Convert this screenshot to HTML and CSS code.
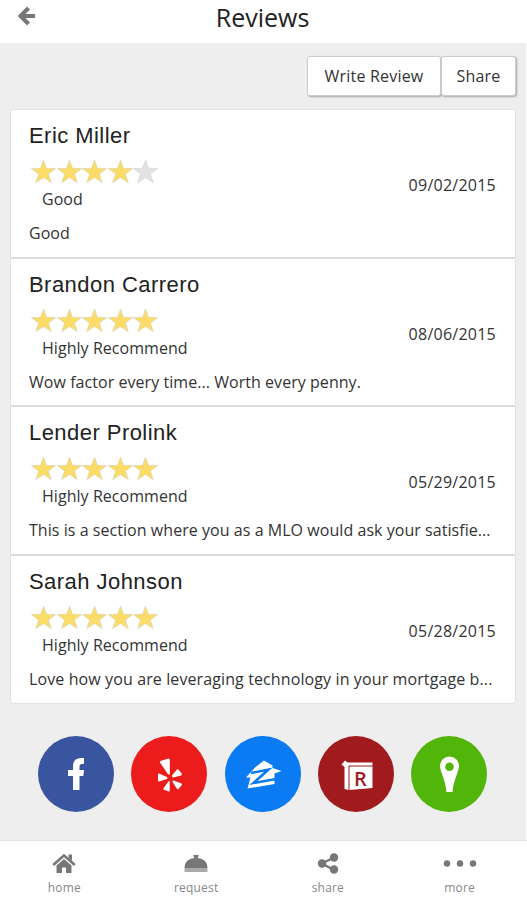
FILE: index.html
```
<!DOCTYPE html>
<html lang="en">

<head>
    <meta charset="UTF-8">
    <meta name="viewport" content="width=device-width, initial-scale=1.0">
    <title>Reviews</title>
    <link rel="stylesheet" href="styles.css">
</head>

<body>
    <svg class="defs">
        <symbol id="star" viewBox="0 0 26 25">
            <path d="M13 1L16 9.2L25.3 9.5L18 15L20.8 23.8L13 18.6L5.2 23.8L8 15L0.7 9.5L10 9.2Z" />
        </symbol>
    </svg>

    <header>
        <a class="back" href="#">
            <svg width="18" height="20" viewBox="0 0 18 20">
                <path d="M10.500 2L2.500 10L10.500 18M3 10H17" fill="none" stroke="#777" stroke-width="4" />
            </svg>
        </a>
        <h1>Reviews</h1>
    </header>

    <main>
        <div class="actions">
            <button class="write">Write Review</button>
            <button class="share">Share</button>
        </div>

        <div class="reviews">
            <div class="review">
                <h2>Eric Miller</h2>
                <div class="stars">
                    <svg><use href="#star" /></svg><svg><use href="#star" /></svg><svg><use href="#star" /></svg><svg><use href="#star" /></svg><svg class="off"><use href="#star" /></svg>
                </div>
                <div class="rating">Good</div>
                <div class="date">09/02/2015</div>
                <p>Good</p>
            </div>
            <div class="review">
                <h2>Brandon Carrero</h2>
                <div class="stars">
                    <svg><use href="#star" /></svg><svg><use href="#star" /></svg><svg><use href="#star" /></svg><svg><use href="#star" /></svg><svg><use href="#star" /></svg>
                </div>
                <div class="rating">Highly Recommend</div>
                <div class="date">08/06/2015</div>
                <p>Wow factor every time... Worth every penny.</p>
            </div>
            <div class="review">
                <h2>Lender Prolink</h2>
                <div class="stars">
                    <svg><use href="#star" /></svg><svg><use href="#star" /></svg><svg><use href="#star" /></svg><svg><use href="#star" /></svg><svg><use href="#star" /></svg>
                </div>
                <div class="rating">Highly Recommend</div>
                <div class="date">05/29/2015</div>
                <p>This is a section where you as a MLO would ask your satisfie...</p>
            </div>
            <div class="review">
                <h2>Sarah Johnson</h2>
                <div class="stars">
                    <svg><use href="#star" /></svg><svg><use href="#star" /></svg><svg><use href="#star" /></svg><svg><use href="#star" /></svg><svg><use href="#star" /></svg>
                </div>
                <div class="rating">Highly Recommend</div>
                <div class="date">05/28/2015</div>
                <p class="long">Love how you are leveraging technology in your mortgage b...</p>
            </div>
        </div>

        <div class="social">
            <a class="facebook" href="#">
                <svg viewBox="0 0 76 76">
                    <path d="M35 54V40H30V34H35V30.500Q35 22 43 22H46V28H43.500Q41.500 28 41.500 30.500V34H46L45.300 40H41.500V54Z" />
                </svg>
            </a>
            <a class="yelp" href="#">
                <svg viewBox="0 0 76 76">
                    <path d="M29.500 25L37.500 22.500Q38.800 22.300 38.800 24V38Q38 39.500 36.800 38L29 26.500Q28.600 25.500 29.500 25Z" />
                    <path d="M28 37.500L36 41Q37 42 36 43L28 45.500Q27 45.500 27 44V38.500Q27.200 37.300 28 37.500Z" />
                    <path d="M38.700 46V54.500Q38.500 56 37 55.300L32.500 53.500Q32 52.800 32.700 52L37.300 45.500Q38.500 44.500 38.700 46Z" />
                    <path d="M42.500 44.500L50.500 47.500Q51.500 48 50.800 49L47.500 53Q46.500 53.500 45.800 52.500L41.500 45.700Q41.300 44.500 42.500 44.500Z" />
                    <path d="M41 39.500L46 33.500Q47 32.700 47.700 33.700L51 38Q51 39.200 50 39.500L42.200 41.500Q40.700 41 41 39.500Z" />
                </svg>
            </a>
            <a class="zillow" href="#">
                <svg viewBox="0 0 76 76">
                    <path d="M39 24.500L47.500 29.500V32L56.500 35L49.500 37.500V48L22.500 52.500L25.500 41.500H21L30 31.500Z" />
                    <path class="z" d="M26 37L43.500 33.500L28.500 47L51 43" />
                </svg>
            </a>
            <a class="realtor" href="#">
                <svg viewBox="0 0 76 76">
                    <path d="M23.500 28.500L27 24.500L29.500 26.500H54.500V29.500H30.500V54L26.500 53V31Z" />
                    <path d="M31.500 30.500H54.500V52L31.500 54Z" />
                    <text x="36" y="49.500">R</text>
                </svg>
            </a>
            <a class="pin" href="#">
                <svg viewBox="0 0 76 76">
                    <path fill-rule="evenodd" d="M38.500 20.500A9.500 9.500 0 0 1 48 30C48 35 42.500 44 41.500 56H35.500C34.500 44 29 35 29 30A9.500 9.500 0 0 1 38.500 20.500ZM38.500 26.500A4.300 4.300 0 1 0 38.500 35.100A4.300 4.300 0 1 0 38.500 26.500Z" />
                </svg>
            </a>
        </div>
    </main>

    <nav>
        <a href="#">
            <svg width="36" height="24" viewBox="0 0 36 24">
                <path d="M18 7L25.500 13.500V21H20V15.500H16V21H10.500V13.500Z" />
                <path d="M7.200 13L18 3.500L28.800 13" fill="none" stroke="#777" stroke-width="2.500" />
                <path d="M22.500 2.500H26V9L22.500 6Z" />
            </svg>
            <span>home</span>
        </a>
        <a href="#">
            <svg width="36" height="24" viewBox="0 0 36 24">
                <path d="M15 3.500Q18 2 21 3.500L19.500 6Q29.500 7 29.500 16H6.500Q6.500 7 16.500 6Z" />
                <path class="light" d="M6.500 16H29.500V20H6.500Z" />
            </svg>
            <span>request</span>
        </a>
        <a href="#">
            <svg width="36" height="24" viewBox="0 0 36 24">
                <path d="M24 5.500L12 11.500L24 18" fill="none" stroke="#777" stroke-width="2.500" />
                <circle cx="24" cy="5.500" r="4.200" />
                <circle cx="12" cy="11.500" r="4.200" />
                <circle cx="24" cy="17.500" r="4.200" />
            </svg>
            <span>share</span>
        </a>
        <a href="#">
            <svg width="36" height="24" viewBox="0 0 36 24">
                <circle cx="5" cy="11.500" r="3.200" />
                <circle cx="18" cy="11.500" r="3.200" />
                <circle cx="31" cy="11.500" r="3.200" />
            </svg>
            <span>more</span>
        </a>
    </nav>
</body>

</html>
```
FILE: styles.css
```
* {
    box-sizing: border-box;
}

body {
    margin: 0;
    height: 900px;
    display: flex;
    flex-direction: column;
    font-family: "Open Sans", "Noto Sans", sans-serif;
    font-size: 16px;
    color: #333;
    background-color: #fff;
    overflow: hidden;
}

.defs {
    display: none;
}

header {
    display: flex;
    height: 43px;
    padding-left: 18px;
}

.back {
    width: 18px;
    margin-top: 6px;
}

.back svg {
    display: block;
}

h1 {
    flex: 1;
    margin: 0 38px 0 0;
    font-size: 25px;
    font-weight: normal;
    line-height: 35px;
    text-align: center;
    color: #222;
}

main {
    height: 797px;
    margin-right: 1px;
    padding: 13px 10px 0;
    background-color: #eee;
}

.actions {
    display: flex;
    justify-content: flex-end;
    height: 40px;
}

button {
    padding: 0;
    font-family: inherit;
    font-size: 16px;
    letter-spacing: 0.200px;
    color: #333;
    background-color: #fff;
    border: 1px solid #ccc;
    border-radius: 3px;
    box-shadow: 1px 1px 2px rgba(0, 0, 0, 0.3);
}

.write {
    width: 134px;
}

.share {
    width: 75px;
}

.reviews {
    margin-top: 13px;
    height: 595px;
    background-color: #fff;
    border: 1px solid #e2e2e2;
    border-radius: 3px;
}

.review {
    display: grid;
    grid-template-columns: 1fr 90px;
    grid-template-rows: 36px 24px 30px 1fr;
    height: 148.600px;
    padding: 7px 19px 0 18px;
    border-bottom: 2px solid #ddd;
}

.review:last-child {
    border-bottom: none;
}

h2 {
    grid-column: 1 / 3;
    margin: 0;
    font-family: "Liberation Sans", Arial, sans-serif;
    font-size: 22px;
    font-weight: normal;
    letter-spacing: 0.450px;
    line-height: 37px;
    color: #222;
}

.stars {
    display: flex;
    margin: 6px 0 0 1px;
}

.stars svg {
    width: 27px;
    height: 25px;
    margin-right: -1.400px;
    fill: #fbdc66;
    stroke: #ccc;
    stroke-width: 0.500;
}

.stars .off {
    fill: #e2e2e2;
}

.rating {
    grid-row: 3;
    padding-left: 13px;
    line-height: 44px;
    letter-spacing: 0.050px;
}

.date {
    grid-column: 2;
    grid-row: 2 / 4;
    line-height: 64px;
    letter-spacing: 0.250px;
    white-space: nowrap;
    text-align: right;
}

.review p {
    grid-column: 1 / 3;
    margin: 0;
    line-height: 53px;
    letter-spacing: 0.050px;
    white-space: nowrap;
}

.review .long {
    letter-spacing: 0.110px;
}

.social {
    display: flex;
    justify-content: space-between;
    margin: 32px 29px 0 28px;
}

.social a {
    width: 76px;
    height: 76px;
    border-radius: 50%;
}

.social svg {
    display: block;
    fill: #fff;
}

.facebook {
    background-color: #3a559f;
}

.yelp {
    background-color: #ec1c1c;
}

.zillow {
    background-color: #0a7bf2;
}

.zillow .z {
    fill: none;
    stroke: #0a7bf2;
    stroke-width: 2.500;
}

.realtor {
    background-color: #a01a1e;
}

.realtor text {
    font-size: 20px;
    font-weight: 600;
    fill: #a01a1e;
}

.pin {
    background-color: #52b60a;
}

nav {
    display: flex;
    height: 60px;
    border-top: 1px solid #e2e2e2;
}

nav a {
    width: 25%;
    padding: 11px 3px 0 0;
    text-align: center;
    font-size: 12px;
    line-height: 24px;
    letter-spacing: 0.200px;
    text-decoration: none;
    color: #888;
}

nav svg {
    display: block;
    margin: 0 auto;
    fill: #777;
}

nav .light {
    fill: #aaa;
}
```
